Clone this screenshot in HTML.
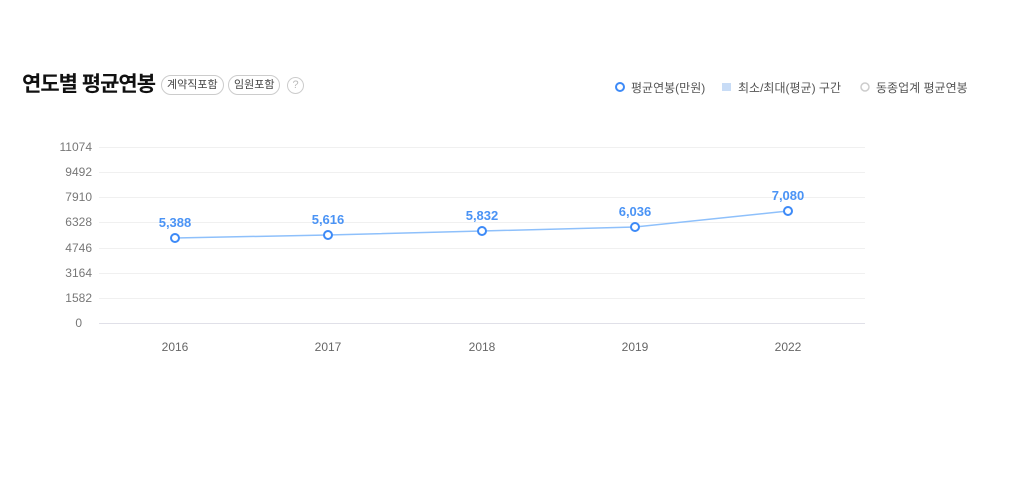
<!DOCTYPE html>
<html><head><meta charset="utf-8"><style>
body{margin:0;width:1024px;height:488px;background:#fff;font-family:"Liberation Sans","Noto Sans CJK KR",sans-serif;position:relative;overflow:hidden}
.t{position:absolute;left:22px;top:68px;font-size:21px;font-weight:bold;color:#111;letter-spacing:-1px}
.b{position:absolute;top:75px;height:20px;border:1px solid #ccc;border-radius:11px;font-size:11px;color:#444;line-height:19px;padding:0 5px;box-sizing:border-box}
.q{position:absolute;left:287px;top:77px;width:17px;height:17px;border:1px solid #ccc;border-radius:50%;box-sizing:border-box;font-size:11px;color:#bbb;text-align:center;line-height:15px}
.lg{position:absolute;top:79px;font-size:12px;color:#555}
</style></head><body>
<div class="t">연도별 평균연봉</div>
<div class="b" style="left:161px">계약직포함</div>
<div class="b" style="left:228px">임원포함</div>
<div class="q">?</div>
<svg style="position:absolute;left:0;top:0" width="1024" height="488">
<circle cx="620" cy="87" r="4" fill="none" stroke="#3d8af7" stroke-width="2"/>
<rect x="722" y="83" width="9" height="8" fill="#c8dcf6"/>
<circle cx="865" cy="87" r="4" fill="none" stroke="#ccc" stroke-width="1.5"/>
<g stroke="#f0f0f0" stroke-width="1">
<line x1="99" x2="865" y1="147.5" y2="147.5"/><line x1="99" x2="865" y1="172.5" y2="172.5"/><line x1="99" x2="865" y1="197.5" y2="197.5"/><line x1="99" x2="865" y1="222.5" y2="222.5"/><line x1="99" x2="865" y1="248.5" y2="248.5"/><line x1="99" x2="865" y1="273.5" y2="273.5"/><line x1="99" x2="865" y1="298.5" y2="298.5"/></g>
<line x1="99" x2="865" y1="323.5" y2="323.5" stroke="#e0e0e8"/>
<g font-size="12" fill="#777" text-anchor="end" font-family="Liberation Sans,sans-serif">
<text x="92" y="151">11074</text><text x="92" y="176">9492</text><text x="92" y="201">7910</text><text x="92" y="226">6328</text><text x="92" y="252">4746</text><text x="92" y="277">3164</text><text x="92" y="302">1582</text><text x="82" y="327">0</text></g>
<g font-size="12" fill="#666" text-anchor="middle"><text x="175" y="351">2016</text><text x="328" y="351">2017</text><text x="482" y="351">2018</text><text x="635" y="351">2019</text><text x="788" y="351">2022</text></g>
<polyline points="175,238 328,235 482,231 635,227 788,211" fill="none" stroke="#8ec0fb" stroke-width="1.5"/>
<g fill="#fff" stroke="#3d8af7" stroke-width="2"><circle cx="175" cy="238" r="4"/><circle cx="328" cy="235" r="4"/><circle cx="482" cy="231" r="4"/><circle cx="635" cy="227" r="4"/><circle cx="788" cy="211" r="4"/></g>
<g font-size="13" font-weight="bold" fill="#4a93f5" text-anchor="middle"><text x="175" y="227">5,388</text><text x="328" y="224">5,616</text><text x="482" y="220">5,832</text><text x="635" y="216">6,036</text><text x="788" y="200">7,080</text></g>
</svg>
<div class="lg" style="left:631px">평균연봉(만원)</div>
<div class="lg" style="left:738px">최소/최대(평균) 구간</div>
<div class="lg" style="left:876px">동종업계 평균연봉</div>
</body></html>
